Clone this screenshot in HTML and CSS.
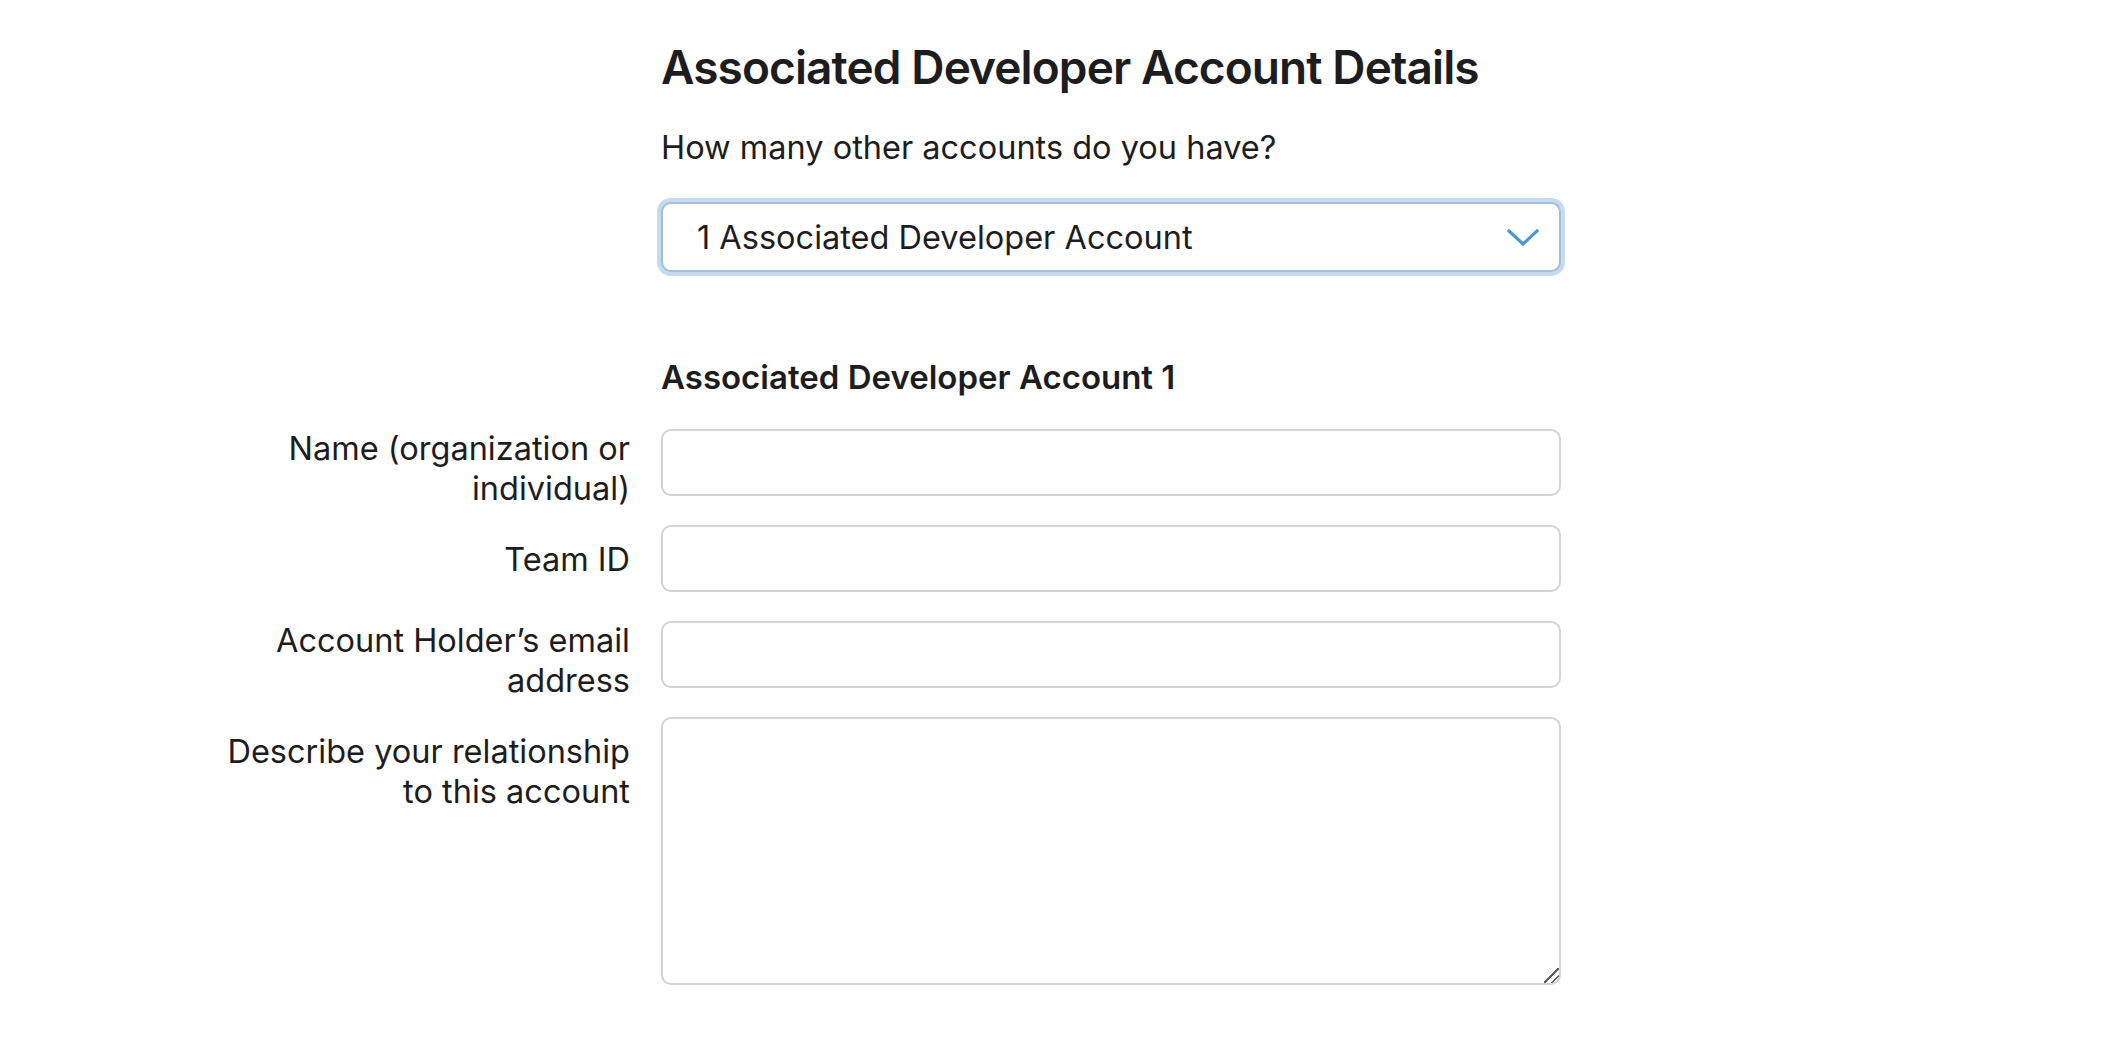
FILE: index.html
```html
<!DOCTYPE html>
<html lang="en">
<head>
    <meta charset="UTF-8">
    <meta name="viewport" content="width=device-width, initial-scale=1.0">
    <title>Associated Developer Account Details</title>
    <link rel="stylesheet" href="styles.css">
</head>
<body>
    <div class="form-page">
        <!-- Intro: title, question and count picker -->
        <div class="intro">
            <h1>Associated Developer Account Details</h1>
            <p class="question">How many other accounts do you have?</p>
            <div class="select-wrap">
                <select id="accountCount" class="select-control">
                    <option>1 Associated Developer Account</option>
                    <option>2 Associated Developer Accounts</option>
                    <option>3 Associated Developer Accounts</option>
                </select>
                <svg class="select-arrow" width="32" height="18" viewBox="0 0 32 18">
                    <path d="M2 2 L16 15 L30 2" fill="none" stroke="#4a98d3" stroke-width="3.2" stroke-linecap="square"/>
                </svg>
            </div>
        </div>

        <!-- Account 1 fields -->
        <div class="account-form">
            <h2>Associated Developer Account 1</h2>

            <label for="accName" class="field-label two-line">Name (organization or individual)</label>
            <input type="text" id="accName" class="form-control">

            <label for="teamId" class="field-label">Team ID</label>
            <input type="text" id="teamId" class="form-control">

            <label for="holderEmail" class="field-label two-line">Account Holder’s email address</label>
            <input type="email" id="holderEmail" class="form-control">

            <label for="relationship" class="field-label">Describe your relationship to this account</label>
            <textarea id="relationship" class="form-control textarea-control"></textarea>
        </div>
    </div>
</body>
</html>
```

FILE: styles.css
```css
html {
    background: #fff;
}
body {
    margin: 0;
    font-family: Inter, "Noto Sans", sans-serif;
    color: #1d1d1f;
}
.form-page {
    padding-top: 39px;
}
.intro {
    margin-left: 661px;
    width: 900px;
}
h1 {
    margin: 0 0 33px;
    font-size: 46px;
    line-height: 56px;
    font-weight: 600;
    letter-spacing: -0.9px;
}
.question {
    margin: 0 0 34px;
    font-size: 32.5px;
    line-height: 40px;
}
.select-wrap {
    position: relative;
}
.select-control {
    display: block;
    width: 100%;
    height: 70px;
    padding: 0 80px 0 34px;
    font-family: inherit;
    font-size: 32.5px;
    color: #1d1d1f;
    background: #fff;
    border: 2px solid #a7bdd5;
    border-radius: 10px;
    box-shadow: 0 0 0 4px #c5dbf0;
    appearance: none;
    -webkit-appearance: none;
    box-sizing: border-box;
    outline: none;
}
.select-arrow {
    position: absolute;
    right: 22px;
    top: 27px;
    pointer-events: none;
}
.account-form {
    display: grid;
    grid-template-columns: 420px 900px;
    column-gap: 31px;
    padding-left: 210px;
    margin-top: 85px;
}
h2 {
    grid-column: 2;
    margin: 0 0 32px;
    font-size: 33px;
    line-height: 40px;
    font-weight: 600;
}
.field-label {
    grid-column: 1;
    padding-top: 15px;
    margin-bottom: 16px;
    font-size: 32.5px;
    line-height: 40px;
    text-align: right;
}
.field-label.two-line {
    padding-top: 0;
}
.form-control {
    grid-column: 2;
    width: 100%;
    height: 67px;
    margin: 0 0 29px;
    padding: 0 20px;
    font-family: inherit;
    font-size: 32.5px;
    color: #1d1d1f;
    border: 2px solid #d2d2d7;
    border-radius: 10px;
    box-sizing: border-box;
    outline: none;
}
.textarea-control {
    height: 268px;
    padding: 14px 20px;
    resize: vertical;
}
.textarea-control::-webkit-scrollbar {
    width: 18px;
    height: 18px;
}
.textarea-control::-webkit-resizer {
    background: linear-gradient(135deg,
        transparent 46%, #5f5f5f 46%, #5f5f5f 54%,
        transparent 54%, transparent 71%, #5f5f5f 71%, #5f5f5f 79%,
        transparent 79%);
}
```
